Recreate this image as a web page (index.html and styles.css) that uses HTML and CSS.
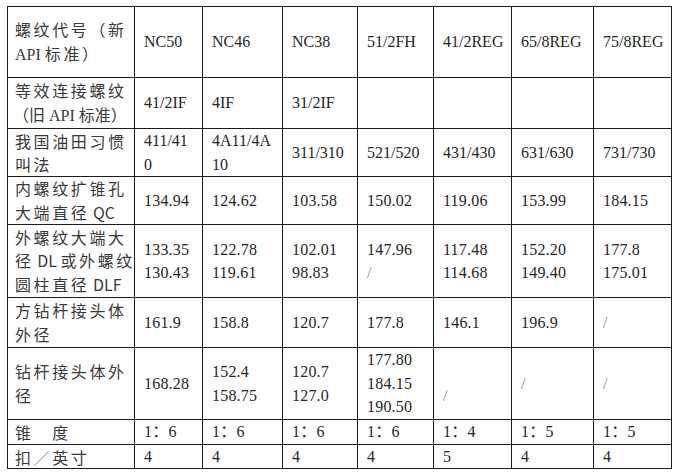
FILE: index.html
```html
<!DOCTYPE html>
<html lang="zh">
<head>
<meta charset="utf-8">
<title>螺纹对照表</title>
<link rel="stylesheet" href="styles.css">
</head>
<body>
<table class="spec">
  <colgroup>
    <col class="c0"><col class="c1"><col class="c2"><col class="c3"><col class="c4"><col class="c5"><col class="c6"><col class="c7">
  </colgroup>
  <tbody>
    <tr class="r1">
      <th>螺纹代号（新<br><span class="api">API </span>标准）</th>
      <td>NC50</td><td>NC46</td><td>NC38</td><td>51/2FH</td><td>41/2REG</td><td>65/8REG</td><td>75/8REG</td>
    </tr>
    <tr class="r2">
      <th>等效连接螺纹<br><span class="tight">（旧<span class="api"> API </span>标准）</span></th>
      <td>41/2IF</td><td>4IF</td><td>31/2IF</td><td></td><td></td><td></td><td></td>
    </tr>
    <tr class="r3">
      <th>我国油田习惯<br>叫法</th>
      <td>411/41<br>0</td><td>4A11/4A<br>10</td><td>311/310</td><td>521/520</td><td>431/430</td><td>631/630</td><td>731/730</td>
    </tr>
    <tr class="r4 num">
      <th>内螺纹扩锥孔<br>大端直径<span class="lat"> QC</span></th>
      <td>134.94</td><td>124.62</td><td>103.58</td><td>150.02</td><td>119.06</td><td>153.99</td><td>184.15</td>
    </tr>
    <tr class="r5 num">
      <th>外螺纹大端大<br>径<span class="lat"> DL </span>或外螺纹<br>圆柱直径<span class="lat"> DLF</span></th>
      <td>133.35<br>130.43</td><td>122.78<br>119.61</td><td>102.01<br>98.83</td><td>147.96<br><span class="slash">/</span></td><td>117.48<br>114.68</td><td>152.20<br>149.40</td><td>177.8<br>175.01</td>
    </tr>
    <tr class="r6 num">
      <th>方钻杆接头体<br>外径</th>
      <td>161.9</td><td>158.8</td><td>120.7</td><td>177.8</td><td>146.1</td><td>196.9</td><td><span class="slash">/</span></td>
    </tr>
    <tr class="r7 num">
      <th>钻杆接头体外<br>径</th>
      <td>168.28</td><td>152.4<br>158.75</td><td>120.7<br>127.0</td><td>177.80<br>184.15<br>190.50</td><td class="low"><span class="slash">/</span></td><td><span class="slash">/</span></td><td><span class="slash">/</span></td>
    </tr>
    <tr class="r8 num">
      <th>锥　度</th>
      <td>1：6</td><td>1：6</td><td>1：6</td><td>1：6</td><td>1：4</td><td>1：5</td><td>1：5</td>
    </tr>
    <tr class="r9 num">
      <th>扣<span class="slash">／</span>英寸</th>
      <td>4</td><td>4</td><td>4</td><td>4</td><td>5</td><td>4</td><td>4</td>
    </tr>
  </tbody>
</table>
</body>
</html>
```

FILE: styles.css
```css
html, body {
  margin: 0;
  padding: 0;
  background: #ffffff;
}

body {
  padding: 6px 0 0 7px;
  color: #262626;
  font-family: "Liberation Serif", "Noto Sans CJK SC", serif;
  font-size: 16px;
}

.spec {
  border-collapse: collapse;
  table-layout: fixed;
  width: 665px;
}

.c0 { width: 127px; }
.c1 { width: 68px; }
.c2 { width: 80px; }
.c3 { width: 75px; }
.c4 { width: 76px; }
.c5 { width: 78px; }
.c6 { width: 82px; }
.c7 { width: 78px; }

.spec th,
.spec td {
  border: 1px solid #1c1c1c;
  padding: 0 0 0 9px;
  vertical-align: middle;
  text-align: left;
  line-height: 23.5px;
  white-space: nowrap;
  overflow: hidden;
}

.spec th {
  font-family: "Noto Sans CJK SC", sans-serif;
  font-weight: normal;
  font-size: 16px;
  letter-spacing: 2.6px;
  padding-left: 7px;
  color: #3a3a3a;
}

.spec th .lat {
  letter-spacing: 0;
}

.spec th .api {
  font-family: "Liberation Serif", serif;
  letter-spacing: 0;
}

.spec th .tight {
  letter-spacing: 0;
  margin-left: -2px;
}

.num td {
  letter-spacing: 0.2px;
}

.r1 { height: 71px; }
.r2 { height: 51px; }
.r3 { height: 47px; }
.r4 { height: 48px; }
.r5 { height: 73px; }
.r6 { height: 50px; }
.r7 { height: 72px; }
.r8 { height: 25px; }
.r9 { height: 24px; }

.r3 th { line-height: 23px; }
.r8 th, .r8 td, .r9 th, .r9 td { line-height: 22px; }

.slash {
  color: #8a8a8a;
}

.spec td.low {
  padding-top: 24px;
}
```
